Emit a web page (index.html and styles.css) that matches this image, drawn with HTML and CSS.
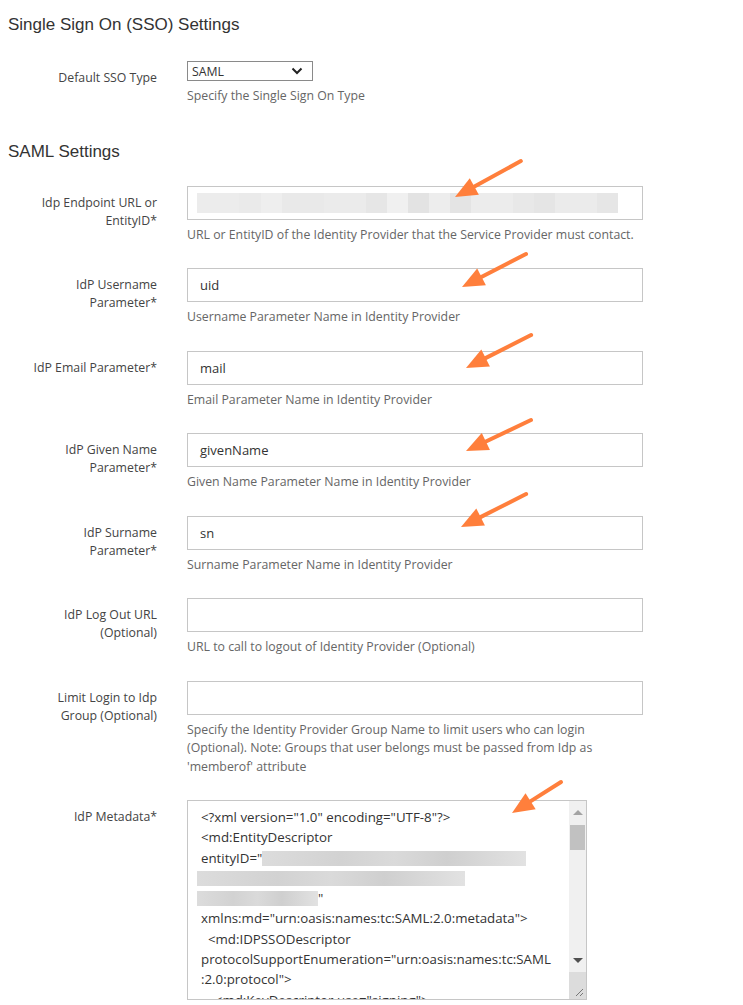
FILE: index.html
```html
<!DOCTYPE html>
<html lang="en">

<head>
    <meta charset="UTF-8">
    <meta name="viewport" content="width=device-width, initial-scale=1.0">
    <title>SSO Settings</title>
    <link rel="stylesheet" href="styles.css">
</head>

<body>
    <div class="page">
        <h2 class="section-title">Single Sign On (SSO) Settings</h2>

        <div class="row row-select">
            <label class="label">Default SSO Type</label>
            <div class="field">
                <div class="select">
                    <span>SAML</span>
                    <svg class="chevron" width="12" height="8" viewBox="0 0 12 8">
                        <polyline points="1.5,1.5 6,6 10.5,1.5" fill="none" stroke="#222" stroke-width="2" />
                    </svg>
                </div>
                <p class="help">Specify the Single Sign On Type</p>
            </div>
        </div>

        <h2 class="section-title second">SAML Settings</h2>

        <div class="row">
            <label class="label">Idp Endpoint URL or EntityID*</label>
            <div class="field">
                <div class="input">
                    <div class="blur">
                        <span style="width:42px;background:#ececec"></span>
                        <span style="width:22px;background:#eaeaea"></span>
                        <span style="width:21px;background:#eeeeee"></span>
                        <span style="width:42px;background:#e9e9e9"></span>
                        <span style="width:42px;background:#ebebeb"></span>
                        <span style="width:21px;background:#e6e6e6"></span>
                        <span style="width:21px;background:#f0f0f0"></span>
                        <span style="width:21px;background:#e3e3e3"></span>
                        <span style="width:21px;background:#ededed"></span>
                        <span style="width:21px;background:#e4e4e4"></span>
                        <span style="width:42px;background:#ececec"></span>
                        <span style="width:21px;background:#e8e8e8"></span>
                        <span style="width:21px;background:#e5e5e5"></span>
                        <span style="width:42px;background:#ebebeb"></span>
                        <span style="width:21px;background:#e6e6e6"></span>
                    </div>
                </div>
                <p class="help">URL or EntityID of the Identity Provider that the Service Provider must contact.</p>
            </div>
        </div>

        <div class="row">
            <label class="label">IdP Username Parameter*</label>
            <div class="field">
                <div class="input">uid</div>
                <p class="help">Username Parameter Name in Identity Provider</p>
            </div>
        </div>

        <div class="row">
            <label class="label">IdP Email Parameter*</label>
            <div class="field">
                <div class="input">mail</div>
                <p class="help">Email Parameter Name in Identity Provider</p>
            </div>
        </div>

        <div class="row">
            <label class="label">IdP Given Name Parameter*</label>
            <div class="field">
                <div class="input">givenName</div>
                <p class="help">Given Name Parameter Name in Identity Provider</p>
            </div>
        </div>

        <div class="row">
            <label class="label">IdP Surname Parameter*</label>
            <div class="field">
                <div class="input">sn</div>
                <p class="help">Surname Parameter Name in Identity Provider</p>
            </div>
        </div>

        <div class="row">
            <label class="label">IdP Log Out URL (Optional)</label>
            <div class="field">
                <div class="input"></div>
                <p class="help">URL to call to logout of Identity Provider (Optional)</p>
            </div>
        </div>

        <div class="row">
            <label class="label">Limit Login to Idp Group (Optional)</label>
            <div class="field">
                <div class="input"></div>
                <p class="help">Specify the Identity Provider Group Name to limit users who can login<br>(Optional). Note: Groups that user belongs must be passed from Idp as<br>'memberof' attribute</p>
            </div>
        </div>

        <div class="row">
            <label class="label">IdP Metadata*</label>
            <div class="field">
                <div class="textarea">
                    <div class="code">
                        <div>&lt;?xml version="1.0" encoding="UTF-8"?&gt;</div>
                        <div>&lt;md:EntityDescriptor</div>
                        <div>entityID="<span class="smudge" style="width:264px"></span></div>
                        <div class="outdent"><span class="smudge" style="width:268px"></span></div>
                        <div class="outdent"><span class="smudge" style="width:121px"></span>"</div>
                        <div>xmlns:md="urn:oasis:names:tc:SAML:2.0:metadata"&gt;</div>
                        <div>&nbsp;&nbsp;&lt;md:IDPSSODescriptor</div>
                        <div>protocolSupportEnumeration="urn:oasis:names:tc:SAML</div>
                        <div>:2.0:protocol"&gt;</div>
                        <div>&nbsp;&nbsp;&nbsp;&nbsp;&lt;md:KeyDescriptor use="signing"&gt;</div>
                    </div>
                    <div class="scrollbar">
                        <div class="sb-up"></div>
                        <div class="sb-thumb"></div>
                        <div class="sb-track"></div>
                        <div class="sb-down"></div>
                        <div class="sb-corner">
                            <svg width="10" height="10" viewBox="0 0 10 10">
                                <line x1="2" y1="9" x2="9" y2="2" stroke="#777" stroke-width="1" />
                                <line x1="6" y1="9" x2="9" y2="6" stroke="#777" stroke-width="1" />
                            </svg>
                        </div>
                    </div>
                </div>
            </div>
        </div>
    </div>

    <!-- orange annotation arrows drawn over the screenshot -->
    <svg class="arrows" width="743" height="1005" viewBox="0 0 743 1005">
        <g fill="#ff7f3c" stroke="#ff7f3c">
            <g transform="translate(455,197) rotate(-28.6)">
                <line x1="18" y1="0" x2="75" y2="0" stroke-width="4" stroke-linecap="round" />
                <polygon points="0,0 22,-9.5 22,9.5" stroke="none" />
            </g>
            <g transform="translate(462,287) rotate(-27.3)">
                <line x1="18" y1="0" x2="72" y2="0" stroke-width="4" stroke-linecap="round" />
                <polygon points="0,0 22,-9.5 22,9.5" stroke="none" />
            </g>
            <g transform="translate(466,368) rotate(-26.9)">
                <line x1="18" y1="0" x2="73" y2="0" stroke-width="4" stroke-linecap="round" />
                <polygon points="0,0 22,-9.5 22,9.5" stroke="none" />
            </g>
            <g transform="translate(466,451) rotate(-25.5)">
                <line x1="18" y1="0" x2="72" y2="0" stroke-width="4" stroke-linecap="round" />
                <polygon points="0,0 22,-9.5 22,9.5" stroke="none" />
            </g>
            <g transform="translate(461,527) rotate(-26.9)">
                <line x1="18" y1="0" x2="73" y2="0" stroke-width="4" stroke-linecap="round" />
                <polygon points="0,0 22,-9.5 22,9.5" stroke="none" />
            </g>
            <g transform="translate(512,813) rotate(-32.3)">
                <line x1="18" y1="0" x2="58" y2="0" stroke-width="4" stroke-linecap="round" />
                <polygon points="0,0 22,-9.5 22,9.5" stroke="none" />
            </g>
        </g>
    </svg>
</body>

</html>
```

FILE: styles.css
```css
body {
    margin: 0;
    background-color: #ffffff;
    font-family: "Open Sans", "Noto Sans", sans-serif;
    color: #444;
}

.page {
    width: 743px;
    height: 1005px;
    overflow: hidden;
}

.section-title {
    font-family: "Liberation Sans", Arial, sans-serif;
    font-weight: normal;
    font-size: 17px;
    line-height: 20px;
    color: #333;
    margin: 15px 0 0 8px;
}

.section-title.second {
    margin-top: 36px;
    margin-bottom: 0;
}

.row {
    display: grid;
    grid-template-columns: 157px 456px;
    column-gap: 30px;
    margin-top: 24px;
}

.row-select {
    margin-top: 26px;
}

.section-title.second + .row {
    margin-top: 24px;
}

.label {
    box-sizing: border-box;
    padding: 8px 0 0 30px;
    text-align: right;
    font-size: 12.3px;
    line-height: 18px;
    color: #444;
}

.row-select .label {
    padding-top: 8px;
}

.help {
    margin: 6px 0 0;
    font-size: 12.3px;
    line-height: 18.5px;
    color: #666;
}

.row-select .help {
    margin-top: 6px;
}

.select {
    box-sizing: border-box;
    width: 126px;
    height: 20px;
    border: 1px solid #8a8a8a;
    display: flex;
    align-items: center;
    justify-content: space-between;
    padding: 0 9px 0 4px;
    font-size: 12.3px;
    color: #333;
}

.input {
    box-sizing: border-box;
    height: 34px;
    border: 1px solid #c6c6c6;
    padding: 0 12px;
    display: flex;
    align-items: center;
    font-size: 13px;
    color: #333;
}

.blur {
    display: flex;
    height: 20px;
    margin-left: -3px;
    margin-top: 1px;
}

.blur span {
    display: block;
    height: 100%;
}

.textarea {
    box-sizing: border-box;
    width: 400px;
    height: 200px;
    border: 1px solid #c6c6c6;
    display: flex;
    overflow: hidden;
}

.code {
    flex: 1;
    padding: 6px 0 0 13px;
    font-size: 13.3px;
    line-height: 20.3px;
    color: #333;
    white-space: nowrap;
    overflow: hidden;
}

.code .outdent {
    margin-left: -4px;
}

.smudge {
    display: inline-block;
    height: 15px;
    vertical-align: -3px;
    background: linear-gradient(90deg, #dcdcdc, #d2d2d2 30%, #dadada 50%, #cfcfcf 70%, #e2e2e2);
}

.scrollbar {
    width: 17px;
    display: flex;
    flex-direction: column;
    background-color: #f0f0f0;
}

.sb-up,
.sb-down {
    height: 24px;
    position: relative;
}

.sb-up::after,
.sb-down::after {
    content: "";
    position: absolute;
    left: 4px;
    width: 0;
    height: 0;
    border-left: 5px solid transparent;
    border-right: 5px solid transparent;
}

.sb-up::after {
    top: 9px;
    border-bottom: 5px solid #a3a3a3;
}

.sb-down::after {
    top: 10px;
    border-top: 5px solid #505050;
}

.sb-thumb {
    height: 25px;
    margin: 0 1px;
    background-color: #c1c1c1;
}

.sb-track {
    flex: 1;
}

.sb-corner {
    height: 25px;
    background-color: #dcdcdc;
    display: flex;
    align-items: flex-end;
    justify-content: flex-end;
    padding: 0 2px 2px 0;
}

.arrows {
    position: absolute;
    left: 0;
    top: 0;
    pointer-events: none;
}
```
